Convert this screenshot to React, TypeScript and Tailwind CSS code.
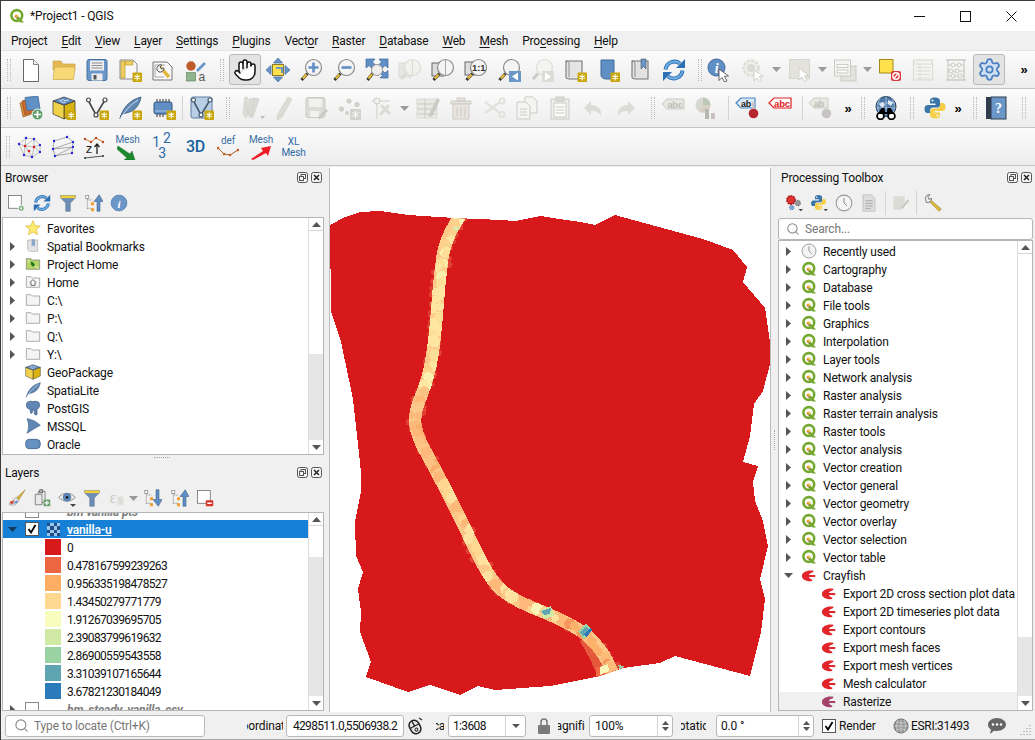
import React from "react";
import { Hand, Settings, Search } from "lucide-react";

type N = React.ReactNode;
const Sv = ({ c, s = 24, w = 24 }: { c: N; s?: number; w?: number }) => (
  <svg width={s} height={s} viewBox={`0 0 ${w} ${w}`} className="shrink-0 block">{c}</svg>
);

const D = "#dcdcd6"; // disabled fill
const DS = "#cbcbc5"; // disabled stroke

const badge = (
  <g>
    <rect x="14.5" y="14.5" width="9.5" height="9.5" rx="1" fill="#c9a60a" />
    <path d="M19.2 16.2v6.2M16.5 17.7l5.4 3.1M16.5 20.8l5.4-3.1" stroke="#fff" strokeWidth="1.1" />
  </g>
);
const mag = (inner?: N, glass = "#f4f4f4", ring = "#8a8a8a", h = "#e2b93b") => (
  <g>
    <path d="M8.5 15.5L2.5 22" stroke="#333" strokeWidth="3" />
    <path d="M7.5 16.5L3.8 20.5" stroke={h} strokeWidth="2.4" />
    <circle cx="14.5" cy="9.5" r="8" fill={glass} stroke={ring} strokeWidth="1.2" />
    {inner}
  </g>
);
const nodesV = (stroke = "#444") => (
  <g fill="#fff" stroke={stroke} strokeWidth="1.2">
    <path d="M3 4l8 15L20 4" fill="none" strokeWidth="1.6" />
    <circle cx="3.5" cy="4" r="2" />
    <circle cx="11" cy="19" r="2" />
    <circle cx="20" cy="4" r="2" />
  </g>
);
const feather = (c = "#5f88b5", d = "#37557a") => (
  <g>
    <path d="M2 23C4 13 11 4 23 1c-1 6-4 11-9 14-4 2-8 2-11 4z" fill={c} stroke={d} strokeWidth=".8" />
    <path d="M2 23C7 15 12 9 20 4" stroke="#dfe8f2" strokeWidth=".9" fill="none" />
  </g>
);
const gpkg = (
  <g>
    <path d="M12 9L23 5v13l-11 5z" fill="#d9b30f" stroke="#333" strokeWidth=".7" />
    <path d="M12 9L1 5v13l11 5z" fill="#f0d24a" stroke="#333" strokeWidth=".7" />
    <path d="M1 5l11-4 11 4-11 4z" fill="#5f8cc0" stroke="#333" strokeWidth=".7" />
    <path d="M8 5l3-1.5 2 1 4-.5M7 3.5l3 3 4-.5" stroke="#cfdcec" strokeWidth="1" fill="none" />
  </g>
);
const scroll = (fill: string, stroke: string, mark?: string) => (
  <g>
    <path d="M3 3h16v18H7c-2 0-4-.5-4-2z" fill={fill} stroke={stroke} strokeWidth="1.1" />
    <path d="M3 3c2 0 3 1 3 3v13" fill="none" stroke={stroke} strokeWidth=".8" />
    {mark && <path d="M12 1h5v10l-2.5-2.5L12 11z" fill={mark} stroke="#456" strokeWidth=".6" />}
  </g>
);

const I: Record<string, N> = {
  newDoc: (
    <g>
      <path d="M4.5 1.5h10l5 5v17h-15z" fill="#fff" stroke="#666" />
      <path d="M14.5 1.5v5h5" fill="#f0f0f0" stroke="#888" />
    </g>
  ),
  open: (
    <g>
      <path d="M1 5V3h8l2 3h12v6H1z" fill="#e4ba55" stroke="#c6a03f" strokeWidth=".6" />
      <path d="M1 21.5L2.5 9H23l-1.5 12.5z" fill="#f8d978" stroke="#cda645" strokeWidth=".7" />
    </g>
  ),
  save: (
    <g>
      <rect x="2" y="1.5" width="20" height="21" rx="2" fill="#6b97c8" stroke="#44709f" />
      <rect x="5" y="2.5" width="14" height="10" fill="#f0f0f0" />
      <path d="M6.5 5h11M6.5 7.5h11M6.5 10h11" stroke="#8b8b8b" />
      <rect x="6.5" y="15.5" width="11" height="7" fill="#ededed" />
      <rect x="8.5" y="17" width="3" height="4.5" fill="#555" />
    </g>
  ),
  layoutNew: (
    <g>
      <path d="M2 2h13l4 4v15H2z" fill="#f7f7f7" stroke="#8a8a8a" />
      <path d="M3 3h4v17H3zM7 3h8v4H7z" fill="#f1cf5c" stroke="#b89b35" strokeWidth=".7" />
      {badge}
    </g>
  ),
  layoutMgr: (
    <g>
      <path d="M2 4h14l5 5v13H2z" fill="#f7f7f7" stroke="#777" />
      <path d="M4 7h10M4 19h9M4 7v12" stroke="#aaa" />
      <path d="M8 8l10 11" stroke="#e1b83c" strokeWidth="3.4" />
      <path d="M6 12a4 4 0 0 1 5-5l-2 2 1.5 2 2.5-1a4 4 0 0 1-5 4z" fill="#f5f5f5" stroke="#555" />
    </g>
  ),
  style: (
    <g>
      <circle cx="7" cy="8" r="4.7" fill="#bf5a2b" />
      <path d="M13 13L21 5" stroke="#6b97c8" strokeWidth="2.6" />
      <rect x="2.5" y="14.5" width="9" height="8.5" fill="#8fb58f" stroke="#5d7f5d" strokeWidth=".6" />
      <text x="14.5" y="23" fontSize="12" fill="#555" fontFamily="Liberation Sans">a</text>
    </g>
  ),
  panSel: (
    <g>
      <rect x="6.5" y="6.5" width="11" height="11" fill="#ffe04d" stroke="#8a7a2a" />
      <path d="M12 0l4.5 5h-9zM12 24l-4.5-5h9zM0 12l5-4.5v9zM24 12l-5 4.5v-9z" fill="#6b97c8" stroke="#3f6a9c" strokeWidth=".7" />
      <path d="M10 10h6v5" fill="none" stroke="#6b97c8" strokeWidth="2" />
    </g>
  ),
  zoomIn: mag(<path d="M14.5 4.5v10M9.5 9.5h10" stroke="#5f8fc4" strokeWidth="2.6" />),
  zoomOut: mag(<path d="M9.5 9.5h10" stroke="#5f8fc4" strokeWidth="2.6" />),
  zoomFull: (
    <g>
      <path d="M1 1h9L7.5 4 11 7.5 7.5 11 4 7.5 1 10zM23 1h-9l2.5 3L13 7.5l3.5 3.5L20 7.5l3 2.5zM23 20h-8l2.5-2.5-2-2 2.5-2.5 2 2 3-2.5z" fill="#5f8fc4" stroke="#3f6a9c" strokeWidth=".7" />
      <path d="M8 15l-5.5 7" stroke="#333" strokeWidth="3" />
      <path d="M7 16l-3.5 4.5" stroke="#e2b93b" strokeWidth="2.2" />
      <circle cx="12" cy="12" r="5.5" fill="#eee" stroke="#999" />
    </g>
  ),
  zoomLayerD: (
    <g>
      <rect x="1" y="5" width="12" height="14" fill="#e6e6e2" stroke={D} />
      <circle cx="14.5" cy="9.5" r="8" fill="#f1f1ee" stroke={D} strokeWidth="1.2" />
      <path d="M14.5 2v15" stroke={D} />
      <path d="M8 15.5L3 21" stroke={D} strokeWidth="3" />
    </g>
  ),
  zoomSel: (
    <g>
      <rect x="1" y="5" width="12" height="13" fill="#ddd" stroke="#666" />
      {mag(<path d="M14.5 2v15" stroke="#aaa" />)}
    </g>
  ),
  zoom11: (
    <g>
      <rect x="1" y="4" width="10" height="13" fill="#ddd" stroke="#666" />
      {mag(<text x="14.7" y="13" textAnchor="middle" fontSize="9.5" fontWeight="700" fill="#333" fontFamily="Liberation Sans">1:1</text>)}
    </g>
  ),
  zoomLast: (
    <g>
      {mag()}
      <rect x="12" y="13" width="12" height="11" fill="#6b97c8" />
      <path d="M21 14.5l-6 4 6 4z" fill="#fff" />
    </g>
  ),
  zoomNextD: (
    <g>
      <circle cx="14.5" cy="9.5" r="8" fill="#f4f4f2" stroke={D} strokeWidth="1.2" />
      <path d="M8 15.5L3 21" stroke={DS} strokeWidth="3" />
      <rect x="12" y="13" width="12" height="11" fill={D} />
      <path d="M15 14.5l6 4-6 4z" fill="#fff" />
    </g>
  ),
  bmNew: <g>{scroll("#e4e4e4", "#777")}{badge}</g>,
  bmBlue: (
    <g>
      <path d="M5 2h13v19H11c-3 0-6-1-6-4z" fill="#5f8fc4" stroke="#3f6a9c" />
      {badge}
    </g>
  ),
  bmShow: scroll("#e2e2e2", "#777", "#6b97c8"),
  refresh: (
    <g fill="none">
      <path d="M3.5 11.5A9 9 0 0 1 18 5.5" stroke="#2f6fb3" strokeWidth="4" />
      <path d="M20.5 12.5A9 9 0 0 1 6 18.5" stroke="#2f6fb3" strokeWidth="4" />
      <path d="M3.5 11.5A9 9 0 0 1 18 5.5" stroke="#6cb0e4" strokeWidth="2" />
      <path d="M20.5 12.5A9 9 0 0 1 6 18.5" stroke="#6cb0e4" strokeWidth="2" />
      <path d="M23 1v9h-9zM1 23v-9h9z" fill="#2f6fb3" />
    </g>
  ),
  identify: (
    <g>
      <circle cx="9.5" cy="9.5" r="8.5" fill="#5f8fc4" stroke="#3f6a9c" />
      <text x="9.5" y="15" textAnchor="middle" fontSize="14" fontWeight="700" fontStyle="italic" fill="#fff" fontFamily="Liberation Serif">i</text>
      <path d="M12 11v11.5l3-3 2.6 4.5 2.4-1.3-2.6-4.3 4.1-.5z" fill="#fff" stroke="#555" strokeWidth=".9" />
    </g>
  ),
  actionD: (
    <g>
      <circle cx="10" cy="10" r="7.5" fill="#eeeeea" stroke={D} strokeWidth="2.5" strokeDasharray="3 1.4" />
      <circle cx="10" cy="10" r="4" fill={D} />
      <path d="M13 12v11l3-3 2.5 4 2.3-1.3-2.5-4 4-.5z" fill="#fff" stroke={DS} strokeWidth=".9" />
    </g>
  ),
  selectD: (
    <g>
      <rect x="1.5" y="1.5" width="20" height="19" fill="#e3e3dc" stroke={DS} strokeDasharray="2 1" />
      <path d="M11 10v12l3-3 2.5 4.5 2.4-1.3-2.5-4.3 4-.5z" fill="#fff" stroke={DS} strokeWidth=".9" />
    </g>
  ),
  formD: (
    <g>
      <rect x="8" y="8" width="15" height="15" fill="#e3e3dc" stroke={DS} />
      <rect x="1.5" y="2" width="16" height="16" fill="#f3f3f1" stroke={DS} />
      <path d="M4 6.5h11v3H4zM4 12h11v3H4z" fill="#fafafa" stroke={DS} />
    </g>
  ),
  deselect: (
    <g>
      <rect x="1.5" y="1.5" width="13.5" height="13.5" fill="#ffe04d" stroke="#a58a1c" />
      <rect x="13" y="13" width="10" height="10" rx="2" fill="#d83a3a" />
      <circle cx="18" cy="18" r="3.2" fill="none" stroke="#fff" strokeWidth="1.4" />
      <path d="M16 20.2l4-4.4" stroke="#fff" strokeWidth="1.4" />
    </g>
  ),
  tableD: (
    <g>
      <rect x="2.5" y="2" width="19" height="20" fill="#f3f3f1" stroke={D} strokeWidth="1.2" />
      <path d="M2.5 6h19M5 9.5h14M5 13h14M5 16.5h14M5 20h14M9 6v16" stroke={D} />
    </g>
  ),
  abacusD: (
    <g fill="#f4f4f2" stroke={DS}>
      <path d="M2 2h20M2 22h20M4 2v20M20 2v20" strokeWidth="1.3" />
      <path d="M4 7h16M4 13h16M4 18h16" />
      <circle cx="9" cy="7" r="2" />
      <circle cx="15" cy="7" r="2" />
      <circle cx="7" cy="13" r="2" />
      <circle cx="13" cy="13" r="2" />
      <circle cx="9" cy="18" r="2" />
      <circle cx="16" cy="18" r="2" />
    </g>
  ),
  dsm: (
    <g>
      <path d="M1 7l9-3 3 14-9 3z" fill="#d98a36" stroke="#8a5a20" strokeWidth=".6" />
      <path d="M3 5l9-3 3 14-9 3z" fill="#c86a2b" stroke="#8a4a20" strokeWidth=".6" />
      <path d="M6 1.5l13-1.5 2 13-13 1.5z" fill="#5f8fc4" stroke="#3f6a9c" strokeWidth=".8" />
      <circle cx="18.5" cy="18.5" r="5.5" fill="#5e9c6c" stroke="#fff" />
      <path d="M18.5 15v7M15 18.5h7" stroke="#fff" strokeWidth="1.6" />
    </g>
  ),
  gpkgNew: <g>{gpkg}{badge}</g>,
  vNew: <g>{nodesV()}{badge}</g>,
  featherNew: <g>{feather()}{badge}</g>,
  chip: (
    <g>
      <rect x="2" y="6" width="18" height="12" rx="2" fill="#5f8fc4" stroke="#34567f" />
      <path d="M5 3v3M8 3v3M11 3v3M14 3v3M17 3v3M5 18v3M8 18v3M11 18v3" stroke="#333" />
      <path d="M3 15h16" stroke="#a9c5e8" />
      {badge}
    </g>
  ),
  meshV: (
    <g>
      <rect x="1" y="1" width="21" height="21" rx="2" fill="#b9cfe6" stroke="#5f7f9f" />
      {nodesV("#44586e")}
      {badge}
    </g>
  ),
  pencilsD: (
    <g fill={D} stroke={DS} strokeWidth=".6">
      <path d="M4 1l3 1-1 2 1 13-2 5-3-4z" />
      <path d="M8 3l4-1 3 1-3 14-3 5-2-5z" />
      <path d="M14 2l4 1-5 15-2 4 0-6z" />
      <path d="M19 20h5l-2.5 3z" stroke="none" fill="#bdbdb7" />
    </g>
  ),
  pencilD: (
    <g fill={D} stroke={DS} strokeWidth=".6">
      <path d="M16 1l4 2-10 18-5 3 1-6z" />
    </g>
  ),
  saveD: (
    <g>
      <rect x="2" y="1.5" width="19" height="20" rx="2" fill={D} stroke={DS} />
      <rect x="5" y="3" width="13" height="8" fill="#f1f1ee" />
      <rect x="6" y="15" width="9" height="6" fill="#f1f1ee" />
      <path d="M13 22l9-9 2 2-8 8z" fill="#c9c9c3" />
    </g>
  ),
  nodesD: (
    <g fill="#d0d0ca">
      <circle cx="3.5" cy="13" r="2.6" />
      <circle cx="11" cy="5" r="2.6" />
      <circle cx="19" cy="8.5" r="2.6" />
      <circle cx="9" cy="17" r="2" />
      <rect x="12" y="13" width="11" height="11" rx="1" fill="#d4d4ce" />
      <path d="M17.5 15v7M14.5 16.5l6 4M14.5 20.5l6-4" stroke="#fff" strokeWidth="1" />
    </g>
  ),
  toolD: (
    <g fill="none" stroke={DS}>
      <path d="M8 23V5M3 5h18" />
      <circle cx="8" cy="5" r="3" fill="#f2f2ef" />
      <path d="M12 9l9 9M20 9l-9 10" strokeWidth="3" stroke={D} />
    </g>
  ),
  tableEditD: (
    <g>
      <rect x="1" y="3" width="20" height="19" fill="#e9e9e4" stroke={D} />
      <path d="M1 8h20M1 13h20M1 18h20M9 3v19" stroke={DS} />
      <path d="M12 20L21 2l3 2-8 17z" fill={DS} />
    </g>
  ),
  trashD: (
    <g fill="#e9e4e0" stroke={DS}>
      <path d="M2 5h20v3H2zM8 5V2h8v3z" />
      <path d="M4 8h16v15H4z" />
      <path d="M8 11v10M12 11v10M16 11v10" />
    </g>
  ),
  scissorsD: (
    <g fill="none" stroke="#e2e2dd" strokeWidth="2.2">
      <path d="M3 6l15 11M3 17l15-11" />
      <circle cx="20" cy="18.5" r="2.5" />
      <circle cx="20" cy="5" r="2.5" />
    </g>
  ),
  copyD: (
    <g fill="#f4f4f2" stroke={DS}>
      <path d="M10 1h8l4 4v12H10z" />
      <path d="M2 6h9l4 4v13H2z" />
      <path d="M5 13h7M5 16h7M5 19h7" />
    </g>
  ),
  pasteD: (
    <g fill="#eeeeea" stroke={DS}>
      <rect x="3" y="3" width="18" height="20" />
      <rect x="8" y="1" width="8" height="4" fill={D} />
      <rect x="6" y="7" width="12" height="14" fill="#fafafa" />
      <path d="M8 11h8M8 14h8M8 17h8" />
    </g>
  ),
  undoD: <path d="M3 12l7-7v4c7 0 11 4 10 11-2-4-5-5-10-5v4z" fill={D} />,
  redoD: <path d="M21 12l-7-7v4C7 9 3 13 4 20c2-4 5-5 10-5v4z" fill={D} />,
  abcD: (
    <g>
      <path d="M1 8l5-5h17v10H6z" fill="#e8e8e2" stroke={DS} />
      <text x="14" y="11.5" textAnchor="middle" fontSize="9" fontWeight="700" fill="#bcbcb6" fontFamily="Liberation Sans">abc</text>
    </g>
  ),
  diagD: (
    <g>
      <circle cx="9" cy="9" r="7.5" fill="#d8d8d2" />
      <path d="M9 9V1.5A7.5 7.5 0 0 1 16.5 9z" fill="#bcc8b8" />
      <path d="M9 9h7.5A7.5 7.5 0 0 1 5 15.5z" fill="#d8cfc5" />
      <rect x="11" y="13" width="4" height="10" fill="#b8b8b2" />
      <rect x="17" y="17" width="4" height="6" fill="#cdbfc0" />
    </g>
  ),
  abPin: (
    <g>
      <path d="M1 7l5-5h14v10H6z" fill="#dbe8f6" stroke="#4a86c8" strokeWidth="1.2" />
      <text x="11" y="10.5" textAnchor="middle" fontSize="9" fontWeight="700" fill="#222" fontFamily="Liberation Sans">ab</text>
      <rect x="17" y="6" width="2.5" height="10" fill="#c8c8c8" />
      <circle cx="18.5" cy="17.5" r="4.8" fill="#b5272c" />
    </g>
  ),
  abcRed: (
    <g>
      <path d="M1 7l5-5h17v10H6z" fill="#fff" stroke="#e02020" strokeWidth="1.2" />
      <text x="14" y="10.5" textAnchor="middle" fontSize="9.5" fontWeight="700" fill="#e02020" fontFamily="Liberation Sans">abc</text>
    </g>
  ),
  abPinD: (
    <g>
      <path d="M1 7l5-5h14v10H6z" fill="#e8e8e2" stroke={DS} />
      <text x="11" y="10.5" textAnchor="middle" fontSize="9" fontWeight="700" fill="#bcbcb6" fontFamily="Liberation Sans">ab</text>
      <circle cx="18.5" cy="17.5" r="4.8" fill="#c8c4c4" />
    </g>
  ),
  globeBin: (
    <g>
      <circle cx="12" cy="10.5" r="10" fill="#4d79a8" stroke="#27405f" />
      <path d="M3 7h18M2.5 12h19M12 .5v19M6 2c-3 6-3 12 0 17M18 2c3 6 3 12 0 17" stroke="#bcd0e6" strokeWidth=".7" fill="none" />
      <path d="M5 8l4-2 2 3-3 3zM14 4l5 2-2 4-3-2z" fill="#dfe7f0" />
      <circle cx="6.5" cy="20" r="3.4" fill="#fff" stroke="#000" strokeWidth="1.8" />
      <circle cx="17.5" cy="20" r="3.4" fill="#fff" stroke="#000" strokeWidth="1.8" />
      <path d="M4 18l3.500-6h3L11 16h2l.5-4h3l3.500 6z" fill="#000" />
    </g>
  ),
  python: (
    <g>
      <path d="M12 1.5c-4 0-5 1.500-5 3.500v2.500h5.500V9H5c-2.500 0-3.500 1.500-3.500 4s1 4 3 4H7v-2.500c0-2 1.500-3 3-3h4.500c1.500 0 2.500-1 2.500-2.500V5c0-2-1.500-3.500-5-3.500z" fill="#3c75a8" />
      <path d="M12 22.500c4 0 5-1.500 5-3.500v-2.500h-5.500V15H19c2.500 0 3.500-1.500 3.500-4s-1-4-3-4H17v2.500c0 2-1.500 3-3 3H9.500C8 12.500 7 13.500 7 15v4c0 2 1.500 3.500 5 3.500z" fill="#f5cf4a" />
      <circle cx="9.500" cy="4.500" r="1" fill="#fff" />
      <circle cx="14.500" cy="19.500" r="1" fill="#fff" />
    </g>
  ),
  help: (
    <g>
      <rect x="1" y="1" width="5" height="22" fill="#2e3c4e" />
      <rect x="6" y="1" width="15" height="22" fill="#6b97c8" stroke="#2e3c4e" />
      <text x="13.500" y="17" textAnchor="middle" fontSize="14" fontWeight="700" fill="#fff" fontFamily="Liberation Serif">?</text>
    </g>
  ),
  meshTri: (
    <g>
      <path d="M2 9L9 3l8 1 6 6 0 7-8 5-8-2zM9 3l-1 8 9-7M8 11l7 11M8 11l-6-2M8 11l-1 9M8 11l9 1 6-2M17 12l-2 10M17 12l6 5M17 4v8" fill="none" stroke="#999" strokeWidth=".6" />
      {[[2, 9], [9, 3], [17, 4], [23, 10], [23, 17], [15, 22], [7, 20]].map(([x, y], i) => <circle key={i} cx={x} cy={y} r="1.200" fill="#2222dd" />)}
      {[[8, 11], [17, 12], [12, 16]].map(([x, y], i) => <circle key={i} cx={x} cy={y} r="1.300" fill="#d42222" />)}
    </g>
  ),
  meshStrip: (
    <g>
      <path d="M4 6L17 2l6 5L3 14l20-2L5 21l17-3 1-11M4 6L3 14l2 7" fill="none" stroke="#888" strokeWidth=".7" />
      {[[4, 6], [17, 2], [23, 7], [3, 14], [23, 12], [5, 21], [22, 18]].map(([x, y], i) => <circle key={i} cx={x} cy={y} r="1.200" fill="#2222dd" />)}
    </g>
  ),
  zProfile: (
    <g>
      <path d="M2 4l6 3 5-4 7 4" stroke="#c87a3a" strokeWidth="1" fill="none" />
      {[[2, 4], [8, 7], [13, 3], [20, 7]].map(([x, y], i) => <circle key={i} cx={x} cy={y} r="1.200" fill="#bb4422" />)}
      <text x="6" y="18" textAnchor="middle" fontSize="13" fill="#222" fontFamily="Liberation Sans">z</text>
      <path d="M14 19V9M11.500 12L14 9l2.500 3" stroke="#222" strokeWidth="1.300" fill="none" />
      <path d="M2 23l18-2" stroke="#555" strokeWidth="1.200" />
      <circle cx="2" cy="23" r="1" fill="#333" />
      <circle cx="20" cy="21" r="1" fill="#333" />
    </g>
  ),
};

const Handle = ({ cls = "" }: { cls?: string }) => (
  <div className={`h-[22px] w-[4px] shrink-0 border-x border-dotted border-[#b8b8b8] ${cls}`} />
);
const Sep = ({ cls = "" }: { cls?: string }) => <div className={`h-[24px] w-px shrink-0 bg-[#d4d4d4] ${cls}`} />;
const Btn = ({ i, cls = "w-[33px]" }: { i: string; cls?: string }) => (
  <div className={`flex h-full shrink-0 items-center justify-center ${cls}`}><Sv c={I[i]} /></div>
);
const Drop = ({ cls = "w-[12px]", c = "#9a9a9a" }: { cls?: string; c?: string }) => (
  <div className={`flex shrink-0 items-center justify-center ${cls}`}>
    <svg width="9" height="5"><path d="M0 0h9L4.500 5z" fill={c} /></svg>
  </div>
);
const More = ({ cls = "" }: { cls?: string }) => (
  <div className={`w-[8px] shrink-0 text-center font-['Liberation_Sans'] text-[13px] font-bold leading-none text-black ${cls}`}>»</div>
);

const tb = "flex shrink-0 items-center overflow-hidden border-b border-[#c4c4c4] bg-linear-to-b from-[#fbfbfb] to-[#ededed]";

const Toolbar1 = () => (
  <div className={`${tb} h-[38px]`}>
    <Handle cls="ml-[6px] mr-[3px]" />
    <Btn i="newDoc" /><Btn i="open" /><Btn i="save" /><Btn i="layoutNew" /><Btn i="layoutMgr" /><Btn i="style" />
    <Handle cls="ml-[8px] mr-[5px]" />
    <div className="flex h-[31px] w-[32px] shrink-0 items-center justify-center rounded-[3px] border border-[#b9b9b9] bg-[#e3e3e3]">
      <Hand size={24} fill="#fff" stroke="#111" strokeWidth={1.500} />
    </div>
    <Btn i="panSel" /><Btn i="zoomIn" /><Btn i="zoomOut" /><Btn i="zoomFull" /><Btn i="zoomLayerD" /><Btn i="zoomSel" /><Btn i="zoom11" /><Btn i="zoomLast" /><Btn i="zoomNextD" /><Btn i="bmNew" /><Btn i="bmBlue" /><Btn i="bmShow" /><Btn i="refresh" />
    <Handle cls="ml-[8px]" />
    <Btn i="identify" cls="w-[34px]" />
    <Btn i="actionD" /><Drop cls="w-[14px]" />
    <Btn i="selectD" /><Drop />
    <Btn i="formD" /><Drop />
    <Btn i="deselect" /><Btn i="tableD" /><Btn i="abacusD" />
    <div className="ml-[1px] flex h-[31px] w-[32px] shrink-0 items-center justify-center rounded-[3px] border border-[#b9b9b9] bg-[#e3e3e3]">
      <Settings size={25} stroke="#4a7fc1" fill="#cfe0f3" strokeWidth={1.700} />
    </div>
    <More cls="ml-[15px]" />
  </div>
);

const Toolbar2 = () => (
  <div className={`${tb} h-[39px]`}>
    <Handle cls="ml-[6px] mr-[3px]" />
    <Btn i="dsm" /><Btn i="gpkgNew" /><Btn i="vNew" /><Btn i="featherNew" /><Btn i="chip" cls="w-[35px]" />
    <Sep cls="ml-[1px]" />
    <Btn i="meshV" cls="w-[38px]" />
    <Handle cls="ml-[5px] mr-[6px]" />
    <Btn i="pencilsD" /><Btn i="pencilD" cls="w-[30px]" /><Btn i="saveD" cls="w-[34px]" /><Btn i="nodesD" /><Btn i="toolD" cls="w-[30px]" /><Drop cls="w-[16px]" />
    <Btn i="tableEditD" cls="w-[32px]" /><Btn i="trashD" /><Btn i="scissorsD" /><Btn i="copyD" /><Btn i="pasteD" /><Btn i="undoD" /><Btn i="redoD" />
    <Handle cls="ml-[9px] mr-[2px]" />
    <Btn i="abcD" cls="w-[32px]" /><Btn i="diagD" cls="w-[34px]" />
    <Sep cls="ml-[5px]" />
    <Btn i="abPin" cls="w-[36px]" /><Btn i="abcRed" cls="w-[30px]" />
    <Sep cls="ml-[7px]" />
    <Btn i="abPinD" />
    <More cls="ml-[8px]" />
    <Handle cls="ml-[9px] mr-[5px]" />
    <Btn i="globeBin" cls="w-[32px]" />
    <Handle cls="ml-[8px] mr-[5px]" />
    <Btn i="python" cls="w-[32px]" />
    <More cls="ml-[3px]" />
    <Handle cls="ml-[11px] mr-[3px]" />
    <Btn i="help" cls="w-[34px]" />
    <Handle cls="ml-[8px]" />
  </div>
);

const Toolbar3 = () => (
  <div className={`${tb} h-[38px]`}>
    <Handle cls="ml-[5px] mr-[2px]" />
    <Btn i="meshTri" /><Btn i="meshStrip" /><Btn i="zProfile" />
    <div className="mt-[3px] h-[28px] w-[33px] shrink-0">
      <div className="text-center text-[10px] leading-[11px] text-[#3a6fa3]">Mesh</div>
      <svg width="22" height="15" className="mx-auto" viewBox="0 0 22 15"><path d="M1 1l12 8 2-3 3 9H7l3-2L0 4z" fill="#1b8a2d" stroke="#0d5a18" strokeWidth=".4" /></svg>
    </div>
    <div className="flex h-[30px] w-[35px] shrink-0 flex-col text-[14px] leading-[14px] text-[#2f6aa8]">
      <div className="flex h-[17px] justify-center gap-[3px]"><span className="mt-[3px]">1</span><span className="-mt-[1px]">2</span></div>
      <div className="-mt-[3px] pl-[1px] text-center">3</div>
    </div>
    <div className="w-[33px] shrink-0 text-center text-[16px] font-medium text-[#17629e]">3D</div>
    <div className="w-[32px] shrink-0 text-center text-[10px] leading-[11px] text-[#3a6fa3]">
      def
      <svg width="22" height="12" className="mx-auto" viewBox="0 0 22 12"><path d="M1 2l6 6 6 1 8-5" stroke="#a8622a" strokeWidth="1" fill="none" />{[[1, 2], [7, 8], [13, 9], [21, 4]].map(([x, y], i) => <circle key={i} cx={x} cy={y} r="1.300" fill="#c85a20" />)}</svg>
    </div>
    <div className="mt-[3px] h-[28px] w-[34px] shrink-0">
      <div className="text-center text-[10px] leading-[11px] text-[#3a6fa3]">Mesh</div>
      <svg width="22" height="15" className="mx-auto" viewBox="0 0 22 15"><path d="M1 14l12-8-2-3 10-2-3 10-2-3L3 15z" fill="#ee1c25" /></svg>
    </div>
    <div className="w-[31px] shrink-0 text-center text-[10px] leading-[11px] text-[#2f6aa8]">XL<br />Mesh</div>
  </div>
);

const Menu = () => {
  const items: [string, string, string][] = [
    ["Pro", "j", "ect"], ["", "E", "dit"], ["", "V", "iew"], ["", "L", "ayer"],
    ["", "S", "ettings"], ["", "P", "lugins"], ["Vect", "o", "r"], ["", "R", "aster"],
    ["", "D", "atabase"], ["", "W", "eb"], ["", "M", "esh"], ["Pro", "c", "essing"], ["", "H", "elp"],
  ];
  return (
    <div className="flex h-[20px] shrink-0 items-center gap-[14px] border-b border-[#e4e4e4] bg-[#f0f0f0] pl-[10px] text-[12px] tracking-[-0.2px] text-[#111]">
      {items.map(([a, b, c]) => (
        <span key={a + b + c}>{a}<span className="underline underline-offset-2">{b}</span>{c}</span>
      ))}
    </div>
  );
};

const Qgis = ({ s = 16 }: { s?: number }) => (
  <svg width={s} height={s} viewBox="0 0 16 16" className="shrink-0">
    <circle cx="7.800" cy="7.500" r="5.400" fill="#fff" stroke="#74a830" strokeWidth="2.600" />
    <path d="M9 8l6 6.500h-3.600L7 10z" fill="#74a830" />
    <circle cx="7" cy="8" r="1.300" fill="#f0a030" />
    <path d="M7 6.500h2.500v2z" fill="#f0d040" />
    <path d="M6 8.500l2 2" stroke="#d94a2a" />
  </svg>
);

const Float = () => (
  <svg width="11" height="11" viewBox="0 0 11 11"><rect x=".5" y=".5" width="10" height="10" rx="2" fill="#f5f5f5" stroke="#555" /><rect x="4" y="2.500" width="4.500" height="4" fill="none" stroke="#555" /><rect x="2.500" y="4.500" width="4" height="4" fill="#f5f5f5" stroke="#555" /></svg>
);
const Close = () => (
  <svg width="11" height="11" viewBox="0 0 11 11"><rect x=".5" y=".5" width="10" height="10" rx="2" fill="#f5f5f5" stroke="#555" /><path d="M3 3l5 5M8 3L3 8" stroke="#222" strokeWidth="1.500" /></svg>
);
const DockHead = ({ t, gap }: { t: string; gap: string }) => (
  <div className={`flex h-[23px] shrink-0 items-center text-[12px] text-[#111] ${gap}`}>
    <span className="pt-[1px]">{t}</span>
    <div className="ml-auto flex items-center gap-[3px]"><Float /><Close /></div>
  </div>
);

const star = <path d="M12 1l3.200 7.200 7.800.8-5.900 5.200 1.700 7.800L12 18l-6.800 4 1.700-7.800L1 9l7.800-.8z" fill="#ffe970" stroke="#d3b33a" />;
const folder = <path d="M2 20V4h7l2 2h11v14z" fill="#f4f4f4" stroke="#8a8a8a" />;
const Tr: Record<string, N> = {
  star,
  bm: <g><path d="M4 3h15v17H9c-3 0-5-1-5-3z" fill="#e4e4e4" stroke="#aaa" /><path d="M10 2h5v11l-2.500-2-2.500 2z" fill="#8ba8c8" /></g>,
  proj: <g><path d="M2 20V4h7l2 2h11v14z" fill="#b6d466" stroke="#777" /><path d="M3 6l18 13" stroke="#fff" /><path d="M8 8l5 2 2 4-3 2-3-3z" fill="#1f7a1f" /></g>,
  home: <g>{folder}<path d="M7 13l5-4.500 5 4.500M9 12.500V17h6v-4.500" fill="#fff" stroke="#222" /></g>,
  folder,
  gpkg,
  feather: feather(),
  pg: <path d="M2 7C2 2 8 1 12 2.500 16 1 22 2 22 7c0 4-2 6-4 6.500V22c-2 1-4 0-4-2v-5c-1 1-3 0-3-1v5c-1 2-3 1-3-1v-4C4 14 2 11 2 7z" fill="#6086b4" stroke="#2b4a70" strokeWidth=".9" />,
  ms: <path d="M3 1c7 1 14 4 20 10-6 3-12 7-20 12 3-7 3-15 0-22z" fill="#6086b4" stroke="#36577f" strokeWidth=".8" />,
  ora: <rect x="1" y="5" width="22" height="14" rx="6" fill="#6590c2" stroke="#2e4e73" />,
};
const Tri = ({ down = false, c = "#555" }: { down?: boolean; c?: string }) => (
  <svg width="9" height="9" viewBox="0 0 9 9" className="shrink-0">
    {down ? <path d="M0 2h9L4.500 7z" fill={c} /> : <path d="M2 0l5 4.500L2 9z" fill={c} />}
  </svg>
);

const Scrollbar = ({ thumb }: { thumb: string }) => (
  <div className="flex w-[15px] shrink-0 flex-col border-l border-[#dcdcdc] bg-white">
    <div className="flex h-[13px] shrink-0 items-center justify-center border-b border-[#d8d8d8]"><svg width="9" height="5"><path d="M4.500 0L9 5H0z" fill="#555" /></svg></div>
    <div className={`${thumb} shrink-0 bg-white`} />
    <div className="grow bg-[#e6e6e6]" />
    <div className="flex h-[14px] shrink-0 items-center justify-center bg-white"><svg width="9" height="5"><path d="M4.500 5L9 0H0z" fill="#555" /></svg></div>
  </div>
);

const browser: [string, string, boolean][] = [
  ["Favorites", "star", false], ["Spatial Bookmarks", "bm", true], ["Project Home", "proj", true], ["Home", "home", true],
  ["C:\\", "folder", true], ["P:\\", "folder", true], ["Q:\\", "folder", true], ["Y:\\", "folder", true],
  ["GeoPackage", "gpkg", false], ["SpatiaLite", "feather", false], ["PostGIS", "pg", false], ["MSSQL", "ms", false], ["Oracle", "ora", false], ["WMS/WMTS", "ora", false],
];

const smallTool: Record<string, N> = {
  addSel: <g><rect x="2" y="2" width="17" height="17" fill="#fff" stroke="#666" /><circle cx="19" cy="19" r="4" fill="#7fae7f" stroke="#fff" /><circle cx="19" cy="19" r="1.500" fill="#fff" /></g>,
  funnel: <g><path d="M2 2h20v3l-7 7v11h-6V12L2 5z" fill="#6d8fb5" stroke="#4b6a8f" strokeWidth=".7" /><path d="M2 2h20v3.500H2z" fill="#f1ce3c" /></g>,
  treeUp: <g><path d="M3 3v18M3 8h7M3 19h7" stroke="#888" strokeDasharray="2 1" /><rect x="1" y="2" width="4" height="4" fill="#fff" stroke="#888" /><rect x="8" y="11" width="4" height="4" fill="#f0a030" /><rect x="8" y="19" width="4" height="4" fill="#f0a030" /><path d="M16 23V10h-4l7-9 5 9h-4v13z" fill="#5f8fc4" stroke="#36577f" strokeWidth=".7" /></g>,
  treeDown: <g><path d="M3 3v18M3 8h7M3 19h7" stroke="#888" strokeDasharray="2 1" /><rect x="1" y="2" width="4" height="4" fill="#fff" stroke="#888" /><rect x="8" y="11" width="4" height="4" fill="#f0a030" /><rect x="8" y="19" width="4" height="4" fill="#f0a030" /><path d="M16 1v13h-4l7 9 5-9h-4V1z" fill="#5f8fc4" stroke="#36577f" strokeWidth=".7" /></g>,
  info: <g><circle cx="12" cy="12" r="10.500" fill="#6b97c8" stroke="#4a78ab" /><text x="12" y="18" textAnchor="middle" fontSize="15" fontWeight="700" fontStyle="italic" fill="#fff" fontFamily="Liberation Serif">i</text></g>,
  brush: <g><path d="M23 1L11 12l3 3z" fill="#d9b441" stroke="#8a6d1c" strokeWidth=".6" /><path d="M11 11l4 5-5 5c-3 1-7 1-9-1 4-1 6-3 6-6z" fill="#e8e8e8" stroke="#777" strokeWidth=".6" /><path d="M2 17l7-2-4 6z" fill="#d93a2a" /><path d="M6 20l6-5 1 3z" fill="#4a7fc1" /></g>,
  addGroup: <g><path d="M7 3h9v15H7z" fill="#f2f2f2" stroke="#666" /><path d="M3 7h9v14H3z" fill="#e8e8e8" stroke="#666" /><rect x="9" y="1" width="4" height="4" fill="#bbb" stroke="#555" /><rect x="14" y="14" width="9" height="9" rx="1" fill="#6f9f6f" /><path d="M18.500 15.500v6M15.500 18.500h6" stroke="#fff" strokeWidth="1.500" /></g>,
  eye: <g><path d="M1 11c5-7 17-7 22 0-5 7-17 7-22 0z" fill="#e8e8e8" stroke="#777" /><circle cx="12" cy="11" r="5" fill="#5f8fc4" stroke="#3f6a9c" /><circle cx="12" cy="11" r="2" fill="#223" /><path d="M16 20h8l-4 4z" fill="#444" /></g>,
  expr: <g><text x="8" y="19" textAnchor="middle" fontSize="21" fill="#c8c8c2" fontFamily="Liberation Serif">ε</text><path d="M14 12c0-3 8-3 8 0v9h-8z" fill="#dededa" /></g>,
  remove: <g><rect x="2" y="2" width="17" height="17" fill="#fff" stroke="#666" /><rect x="13" y="15" width="10" height="8" rx="1" fill="#d8362a" /><path d="M15 19h6" stroke="#fff" strokeWidth="2" /></g>,
  clock: <g><circle cx="12" cy="12" r="10.500" fill="#f4f4f4" stroke="#999" strokeWidth="1.400" /><path d="M12 5v7l4 4" stroke="#888" strokeWidth="1.300" fill="none" /></g>,
  doc: <g><path d="M4 1h11l5 5v17H4z" fill="#ddd" stroke="#bbb" /><path d="M7 9h10M7 12.500h10M7 16h10M7 19.500h7" stroke="#999" /></g>,
  pencilD: <g><path d="M2 3h15v13l-5 5H2z" fill={D} /><path d="M12 18l9-11 2 2-9 11z" fill="#c9c9c3" /></g>,
  gears: <g><circle cx="8" cy="8" r="5.500" fill="#d33" stroke="#a11" strokeDasharray="2.500 1" strokeWidth="2" /><circle cx="17" cy="12" r="3.500" fill="#999" stroke="#777" strokeDasharray="2 1" strokeWidth="1.500" /><circle cx="9" cy="18" r="3" fill="#7fa5d4" stroke="#6b90c0" strokeDasharray="1.500 1" strokeWidth="1.500" /><path d="M18 20h6l-3 3z" fill="#444" /></g>,
  py: <g><g transform="scale(.95)">{I.python}</g><path d="M18 20h6l-3 3z" fill="#444" /></g>,
  wrench: <g><path d="M9 8l14 12-3 3L7 10z" fill="#e0b93c" stroke="#8a6d1c" strokeWidth=".7" /><path d="M2 7a5 5 0 0 1 6-6L5 4l1.500 3L10 6a5 5 0 0 1-7 5z" fill="#eee" stroke="#555" /></g>,
};

const LayerRow = ({ swatch, t }: { swatch: string; t: string }) => (
  <div className="flex h-[18px] shrink-0 items-center pl-[42px]">
    <span className={`block h-[16px] w-[16px] shrink-0 ${swatch}`} />
    <span className="ml-[6px] pt-[2px] text-[12px] tracking-[-0.65px]">{t}</span>
  </div>
);
const legend: [string, string][] = [
  ["bg-[#d7191c]", "0"], ["bg-[#ec6643]", "0.478167599239263"], ["bg-[#feae62]", "0.956335198478527"], ["bg-[#fed790]", "1.43450279771779"],
  ["bg-[#f8fdbe]", "1.91267039695705"], ["bg-[#d0eaa6]", "2.39083799619632"], ["bg-[#9ad3a3]", "2.86900559543558"], ["bg-[#5ea5b1]", "3.31039107165644"], ["bg-[#2b7bba]", "3.67821230184049"],
];

const ST = ({ c, cls = "w-[25px]" }: { c: N; cls?: string }) => (
  <div className={`flex shrink-0 justify-center ${cls}`}><Sv c={c} s={18} /></div>
);

const Left = () => (
  <div className="flex h-full w-[328px] shrink-0 flex-col">
    <div className="h-[23px] shrink-0 pl-[4px] pr-[7px]"><DockHead t="Browser" gap="" /></div>
    <div className="flex h-[28px] shrink-0 items-center pl-[2px]">
      <ST c={smallTool.addSel} /><ST c={I.refresh} cls="w-[28px]" /><ST c={smallTool.funnel} cls="w-[24px]" /><ST c={smallTool.treeUp} cls="w-[27px]" /><ST c={smallTool.info} cls="w-[23px]" />
    </div>
    <div className="ml-[1px] flex h-[238px] w-[322px] shrink-0 overflow-hidden border border-[#b5b5b5] bg-white">
      <div className="min-w-0 grow pt-[1px] text-[12px] text-[#111]">
        {browser.map(([t, ic, ar]) => (
          <div key={t} className="flex h-[18px] items-center">
            <div className="flex w-[19px] shrink-0 justify-center">{ar ? <Tri /> : null}</div>
            <div className="ml-[3px] w-[16px] shrink-0"><Sv c={Tr[ic]} s={16} /></div>
            <span className="ml-[6px] pt-[2px]">{t}</span>
          </div>
        ))}
      </div>
      <Scrollbar thumb="h-[123px]" />
    </div>
    <div className="flex h-[5px] w-[322px] shrink-0 items-center justify-center"><div className="w-[16px] border-t border-dotted border-[#aaa]" /></div>
    <div className="h-[24px] shrink-0 pl-[4px] pr-[7px]"><DockHead t="Layers" gap="h-[24px]" /></div>
    <div className="flex h-[28px] shrink-0 items-center pl-[3px]">
      <ST c={smallTool.brush} /><ST c={smallTool.addGroup} /><ST c={smallTool.eye} /><ST c={smallTool.funnel} /><ST c={smallTool.expr} cls="w-[24px]" />
      <Drop cls="w-[10px]" /><ST c={smallTool.treeDown} cls="w-[30px]" /><ST c={smallTool.treeUp} cls="w-[24px]" /><ST c={smallTool.remove} />
    </div>
    <div className="ml-[1px] flex h-[199px] w-[322px] shrink-0 overflow-hidden border border-[#b5b5b5] bg-white text-[#111]">
      <div className="flex min-w-0 grow flex-col">
        <div className="-mt-[11px] flex h-[18px] shrink-0 items-center pl-[22px]">
          <span className="block h-[14px] w-[14px] shrink-0 border border-[#888]" />
          <span className="ml-[28px] pt-[2px] text-[12px] font-bold italic text-[#808080]">bm vanilla pts</span>
        </div>
        <div className="flex h-[18px] shrink-0 items-center bg-[#1680d6] pl-[5px] text-white">
          <div className="w-[17px] shrink-0"><Tri down c="#163a5c" /></div>
          <span className="flex h-[14px] w-[14px] shrink-0 items-center justify-center border border-[#555] bg-white">
            <svg width="10" height="10" viewBox="0 0 10 10"><path d="M1.500 5l2.500 3.500L8.500 1" stroke="#000" strokeWidth="1.800" fill="none" /></svg>
          </span>
          <svg width="13" height="13" viewBox="0 0 4 4" className="ml-[8px] shrink-0" shapeRendering="crispEdges"><rect width="4" height="4" fill="#9cc6ec" /><path d="M0 0h1v1H0zM2 0h1v1H2zM1 1h1v1H1zM3 1h1v1H3zM0 2h1v1H0zM2 2h1v1H2zM1 3h1v1H1zM3 3h1v1H3z" fill="#1d4f86" /></svg>
          <span className="ml-[7px] pt-[2px] text-[12px] font-semibold underline">vanilla-u</span>
        </div>
        {legend.map(([s, t]) => <LayerRow key={t} swatch={s} t={t} />)}
        <div className="flex h-[18px] shrink-0 items-center pl-[5px]">
          <div className="w-[17px] shrink-0"><Tri /></div>
          <span className="block h-[14px] w-[14px] shrink-0 border border-[#888]" />
          <span className="ml-[28px] pt-[2px] text-[12px] font-bold italic text-[#808080]">bm_steady_vanilla_csv</span>
        </div>
      </div>
      <Scrollbar thumb="h-[31px]" />
    </div>
  </div>
);

const crayfish = (c = "#e1252b") => <path d="M1 8c0-4 6-7 12-6 2 .3 1 2-1 2.500-2 .5-3 1.500-3 2.500h7v2.500c-1-.5-5-.5-7 0 0 1 2 2 3 2.500 1.500.7 1 2-1 2-5 0-10-2-10-6z" fill={c} transform="translate(0 2)" />;

const proc = ["Cartography", "Database", "File tools", "Graphics", "Interpolation", "Layer tools", "Network analysis", "Raster analysis", "Raster terrain analysis", "Raster tools", "Vector analysis", "Vector creation", "Vector general", "Vector geometry", "Vector overlay", "Vector selection", "Vector table"];
const fish = ["Export 2D cross section plot data", "Export 2D timeseries plot data", "Export contours", "Export mesh faces", "Export mesh vertices", "Mesh calculator"];

const Right = () => (
  <div className="flex h-full w-[257px] shrink-0 flex-col pr-[2px]">
    <div className="h-[23px] shrink-0 pl-[3px] pr-[1px]"><DockHead t="Processing Toolbox" gap="" /></div>
    <div className="flex h-[28px] shrink-0 items-center pl-[3px]">
      <ST c={smallTool.gears} /><ST c={smallTool.py} /><ST c={smallTool.clock} /><ST c={smallTool.doc} />
      <Sep cls="h-[20px] mx-[4px]" /><ST c={smallTool.pencilD} cls="w-[22px]" /><Sep cls="h-[20px] mx-[4px]" /><ST c={smallTool.wrench} cls="w-[24px]" />
    </div>
    <div className="mt-[1px] flex h-[22px] shrink-0 items-center rounded-[3px] border border-[#b5b5b5] bg-white pl-[7px] text-[12px] text-[#777]">
      <Search size={14} stroke="#888" strokeWidth={1.800} />
      <span className="ml-[5px]">Search...</span>
    </div>
    <div className="flex h-[471px] shrink-0 overflow-hidden border border-[#b5b5b5] bg-white text-[12px] text-[#111]">
      <div className="min-w-0 grow pt-[1px]">
        <div className="flex h-[18px] items-center">
          <div className="flex w-[18px] shrink-0 justify-center"><Tri /></div>
          <div className="ml-[4px]"><Sv c={smallTool.clock} s={16} /></div><span className="ml-[6px] pt-[1px]">Recently used</span>
        </div>
        {proc.map((t) => (
          <div key={t} className="flex h-[18px] items-center">
            <div className="flex w-[18px] shrink-0 justify-center"><Tri /></div>
            <div className="ml-[4px] flex"><Qgis /></div><span className="ml-[6px] pt-[1px]">{t}</span>
          </div>
        ))}
        <div className="flex h-[18px] items-center">
          <div className="flex w-[18px] shrink-0 justify-center"><Tri down /></div>
          <div className="ml-[4px]"><Sv c={crayfish()} s={16} w={18} /></div><span className="ml-[6px] pt-[1px]">Crayfish</span>
        </div>
        {fish.map((t) => (
          <div key={t} className="flex h-[18px] items-center whitespace-nowrap pl-[42px]">
            <Sv c={crayfish()} s={16} w={18} /><span className="ml-[6px] pt-[1px]">{t}</span>
          </div>
        ))}
        <div className="flex h-[18px] items-center bg-[#f0f0f0] pl-[42px]">
          <Sv c={crayfish("#a2446a")} s={16} w={18} /><span className="ml-[6px] pt-[1px]">Rasterize</span>
        </div>
      </div>
      <Scrollbar thumb="h-[383px]" />
    </div>
  </div>
);

// ---------------- the map drawing -----------------
const outline = "330,226 345,218 360,213 380,212 408,216 455,219 501,221 515,222 541,217 553,219 580,223 595,226 615,216 703,240 733,251 747,268 743,283 765,309 770,343 770,365 763,392 754,405 750,437 743,463 758,467 753,483 755,502 763,522 768,547 760,580 765,600 761,633 750,677 675,657 660,664 623,669 600,677 550,687 495,691 478,687 460,696 430,686 408,693 366,678 371,663 360,633 361,613 358,590 363,573 356,557 355,523 361,493 361,473 353,400 341,343 331,312";
const rough: [number, number][] = [[462, 214], [450, 233], [443, 253], [441, 270], [439, 287], [436, 327], [432, 360], [426, 385], [414, 415], [417, 437], [435, 470], [461, 520], [476, 553], [491, 580], [505, 595], [528, 607], [551, 616], [583, 632], [603, 653], [614, 676]];
const chaikin = (pts: [number, number][]) => {
  const out: [number, number][] = [pts[0]];
  for (let i = 0; i < pts.length - 1; i++) {
    const [a, b] = pts[i];
    const [c, d] = pts[i + 1];
    out.push([a * 0.75 + c * 0.25, b * 0.75 + d * 0.25], [a * 0.25 + c * 0.75, b * 0.25 + d * 0.75]);
  }
  out.push(pts[pts.length - 1]);
  return out;
};
const center = chaikin(chaikin(rough));

function sample(step: number) {
  const out: [number, number][] = [];
  let carry = 0;
  for (let i = 0; i < center.length - 1; i++) {
    const [a, b] = center[i];
    const [c, d] = center[i + 1];
    const l = Math.hypot(c - a, d - b);
    let t = carry;
    for (; t < l; t += step) out.push([a + ((c - a) * t) / l, b + ((d - b) * t) / l]);
    carry = t - l;
  }
  return out;
}
let seed = 7;
const rnd = () => {
  seed = (seed * 16807) % 2147483647;
  return seed / 2147483647;
};
const hex = (x: number, y: number, r: number) => {
  const a0 = rnd() * 3;
  const p: string[] = [];
  for (let i = 0; i < 6; i++) p.push(`${(x + r * Math.cos(a0 + i * 1.047)).toFixed(1)},${(y + r * Math.sin(a0 + i * 1.047)).toFixed(1)}`);
  return p.join(" ");
};
const chips = sample(4).map(([x, y]) => {
  let pal: string[];
  if (y < 235) pal = ["#d8eeb0", "#f8f6b8", "#fdd28c", "#fbb878"];
  else if (y < 395) pal = ["#fee6a2", "#fdde96", "#fbf0b0", "#fee6a2", "#fdd28c"];
  else if (y < 480) pal = ["#fdb87a", "#fcc284", "#fbae6c", "#fdc98a"];
  else if (y < 560) pal = ["#fdc688", "#fdb87a", "#fee0a0", "#fed790"];
  else if (y < 625) pal = ["#fee3a0", "#f8f6b8", "#fdc98a", "#fdb87a", "#fdd38e"];
  else pal = ["#f9a568", "#fdb26c", "#f6965c", "#fcbb78"];
  const px = (rnd() - 0.5) * 10;
  return { x: x + px, y: y + (rnd() - 0.5) * 6, c: pal[Math.floor(rnd() * pal.length)], r: 4 + rnd() * 3 };
});
const halo = sample(8)
  .filter(([, y]) => y < 410 || (y > 410 && y < 480) || y > 530)
  .map(([x, y]) => ({ x: x + (rnd() > 0.5 ? 6 : -6) + (rnd() - 0.5) * 3, y: y + (rnd() - 0.5) * 4, r: 2.500 + rnd() * 2 }));
const riverPts = center.map((p) => p.map((v) => v.toFixed(1)).join(",")).join(" ");

const MapView = () => (
  <svg width="441" height="543" viewBox="330 168 441 543" className="block" shapeRendering="crispEdges">
    <defs>
      <clipPath id="land"><polygon points={outline} /></clipPath>
      <mask id="riv" maskUnits="userSpaceOnUse" x="330" y="168" width="441" height="543">
        <polyline points={riverPts} fill="none" stroke="#fff" strokeWidth="12.5" strokeLinejoin="round" />
      </mask>
    </defs>
    <rect x="330" y="168" width="441" height="543" fill="#fff" />
    <polygon points={outline} fill="#d7191c" />
    <g clipPath="url(#land)">
      {halo.map((h, i) => <polygon key={i} points={hex(h.x, h.y, h.r)} fill="#e4503a" opacity=".7" />)}
      <polygon points="588,636 596,648 606,672 598,678 590,660 580,642" fill="#e4583c" />
      <polygon points="596,668 604,668 612,672 606,680 596,680" fill="#f26a46" />
      <g mask="url(#riv)">
        <polyline points={riverPts} fill="none" stroke="#fdc98a" strokeWidth="13" strokeLinejoin="round" />
        {chips.map((c, i) => <polygon key={i} points={hex(c.x, c.y, c.r)} fill={c.c} />)}
      </g>
      <polygon points="540,611 551,607 554,617 544,620" fill="#cfe9a6" />
      <polygon points="541,612 551,609 550,615 544,616" fill="#5ea5b1" />
      <polygon points="578,632 586,625 592,631 584,641" fill="#9ad3a3" />
      <polygon points="580,633 586,628 589,631 583,637" fill="#5ea5b1" />
      <polygon points="584,636 590,629 592,631 587,638" fill="#2b7bba" />
      <polygon points="600,668 608,665 609,672 600,676" fill="#f8f6b8" />
      <polygon points="618,666 624,667 620,671" fill="#9ad3a3" />
    </g>
  </svg>
);

const clipLbl = "flex h-[16px] shrink-0 justify-center overflow-hidden whitespace-nowrap text-[12px] leading-[16px] text-[#111]";
const field = "flex h-[22px] shrink-0 items-center rounded-[3px] border border-[#b9b9b9] bg-white text-[12px] text-[#111]";
const Spin = () => (
  <div className="ml-auto flex h-full w-[15px] flex-col items-center justify-center gap-[2px] border-l border-[#d4d4d4]">
    <svg width="7" height="4"><path d="M3.500 0L7 4H0z" fill="#555" /></svg>
    <svg width="7" height="4"><path d="M3.500 4L7 0H0z" fill="#555" /></svg>
  </div>
);

const Status = () => (
  <div className="flex h-[27px] shrink-0 items-center border-b border-[#a8a8a8] bg-[#f0f0f0] pb-[1px]">
    <div className={`${field} ml-[4px] w-[200px] pl-[8px] text-[#777]`}>
      <Search size={15} stroke="#888" strokeWidth={1.800} />
      <span className="ml-[5px]">Type to locate (Ctrl+K)</span>
    </div>
    <div className={`${clipLbl} ml-[42px] w-[36px]`}><span className="pr-[5px]">Coordinate</span></div>
    <div className={`${field} ml-[3px] w-[118px] justify-center tracking-[-0.65px]`}>4298511.0,5506938.2</div>
    <div className="ml-[3px] w-[16px] shrink-0">
      <svg width="16" height="18" viewBox="0 0 16 18"><g transform="rotate(-28 8 10)"><rect x="3" y="3" width="10" height="14" rx="5" fill="#e8e8e8" stroke="#222" strokeWidth="1.500" /><path d="M8 3v6M3 9h10" stroke="#222" strokeWidth="1.300" /><circle cx="8" cy="13" r="1.500" fill="none" stroke="#222" /></g><path d="M12 1l3 2" stroke="#333" strokeWidth="1.400" /></svg>
    </div>
    <div className={`${clipLbl} ml-[13px] w-[8px]`}><span>Scale</span></div>
    <div className={`${field} ml-[4px] w-[78px] pl-[4px]`}>
      <span className="tracking-[-0.65px]">1:3608</span>
      <div className="ml-auto flex h-full w-[20px] items-center justify-center border-l border-[#d4d4d4]"><svg width="8" height="4"><path d="M0 0h8L4 4z" fill="#555" /></svg></div>
    </div>
    <div className="ml-[12px] w-[11px] shrink-0">
      <svg width="12" height="16" viewBox="0 0 12 16"><path d="M3 7V4a3 3 0 0 1 6 0v3" fill="none" stroke="#777" strokeWidth="1.500" /><rect x="0" y="7" width="12" height="9" rx="1" fill="#7a7a7a" /></svg>
    </div>
    <div className={`${clipLbl} ml-[9px] w-[27px]`}><span className="pr-[3px]">Magnifier</span></div>
    <div className={`${field} ml-[4px] w-[84px] pl-[5px]`}><span>100%</span><Spin /></div>
    <div className={`${clipLbl} ml-[8px] w-[25px]`}>Rotation</div>
    <div className={`${field} ml-[10px] w-[98px] pl-[4px]`}><span>0.0 °</span><Spin /></div>
    <span className="ml-[8px] flex h-[14px] w-[14px] shrink-0 items-center justify-center border border-[#555] bg-white">
      <svg width="10" height="10" viewBox="0 0 10 10"><path d="M1.500 5l2.500 3.500L8.500 1" stroke="#000" strokeWidth="1.800" fill="none" /></svg>
    </span>
    <span className="ml-[3px] w-[54px] shrink-0 text-[12px] text-[#111]">Render</span>
    <svg width="16" height="16" viewBox="0 0 16 16" className="shrink-0"><circle cx="8" cy="8" r="7" fill="#9a9a9a" stroke="#666" /><path d="M1 8h14M8 1v14M3 3.500c3 2 7 2 10 0M3 12.500c3-2 7-2 10 0M5 2c-2 4-2 8 0 12M11 2c2 4 2 8 0 12" stroke="#ddd" strokeWidth=".6" fill="none" /></svg>
    <span className="ml-[2px] w-[77px] shrink-0 text-[12px] tracking-[-0.3px] text-[#111]">ESRI:31493</span>
    <svg width="18" height="16" viewBox="0 0 18 16" className="shrink-0"><path d="M9 0c5 0 9 3 9 6.500S14 13 9 13c-1 0-2 0-3-.3L2 16l1-4.500C1 10.500 0 8.500 0 6.500 0 3 4 0 9 0z" fill="#666" /><circle cx="5" cy="6.500" r="1.200" fill="#fff" /><circle cx="9" cy="6.500" r="1.200" fill="#fff" /><circle cx="13" cy="6.500" r="1.200" fill="#fff" /></svg>
    <svg width="12" height="12" viewBox="0 0 12 12" className="ml-auto mr-[3px] mt-[8px]"><path d="M10 1v1M7 4v1M10 4v1M4 7v1M7 7v1M10 7v1M1 10v1M4 10v1M7 10v1M10 10v1" stroke="#aaa" strokeWidth="1.400" /></svg>
  </div>
);

export default function App() {
  return (
    <div className="relative flex h-[740px] w-[1035px] flex-col overflow-hidden border-l border-t border-[#3c3c3c] bg-[#f0f0f0] font-['Roboto','Liberation_Sans',sans-serif] tracking-[-0.15px]">
      <div className="flex h-[30px] shrink-0 items-center bg-white pl-[8px]">
        <Qgis />
        <span className="ml-[5px] text-[12px] text-[#111]">*Project1 - QGIS</span>
        <div className="ml-auto flex items-center">
          <svg width="11" height="11" viewBox="0 0 11 11"><path d="M0 5.500h11" stroke="#111" /></svg>
          <svg width="11" height="11" viewBox="0 0 11 11" className="ml-[35px]"><rect x=".5" y=".5" width="10" height="10" fill="none" stroke="#111" /></svg>
          <svg width="11" height="11" viewBox="0 0 11 11" className="ml-[35px] mr-[18px]"><path d="M.5.500l10 10M10.500.500l-10 10" stroke="#111" /></svg>
        </div>
      </div>
      <Menu />
      <Toolbar1 />
      <Toolbar2 />
      <Toolbar3 />
      <div className="flex min-h-0 grow">
        <Left />
        <div className="mt-[2px] h-[544px] w-[442px] shrink-0 border-x border-[#bdbdbd] bg-white">
          <div className="-mt-[1px] w-[440px] overflow-hidden"><MapView /></div>
        </div>
        <div className="flex w-[7px] shrink-0 items-center justify-center"><div className="h-[20px] border-l border-dotted border-[#aaa]" /></div>
        <Right />
      </div>
      <Status />
    </div>
  );
}
